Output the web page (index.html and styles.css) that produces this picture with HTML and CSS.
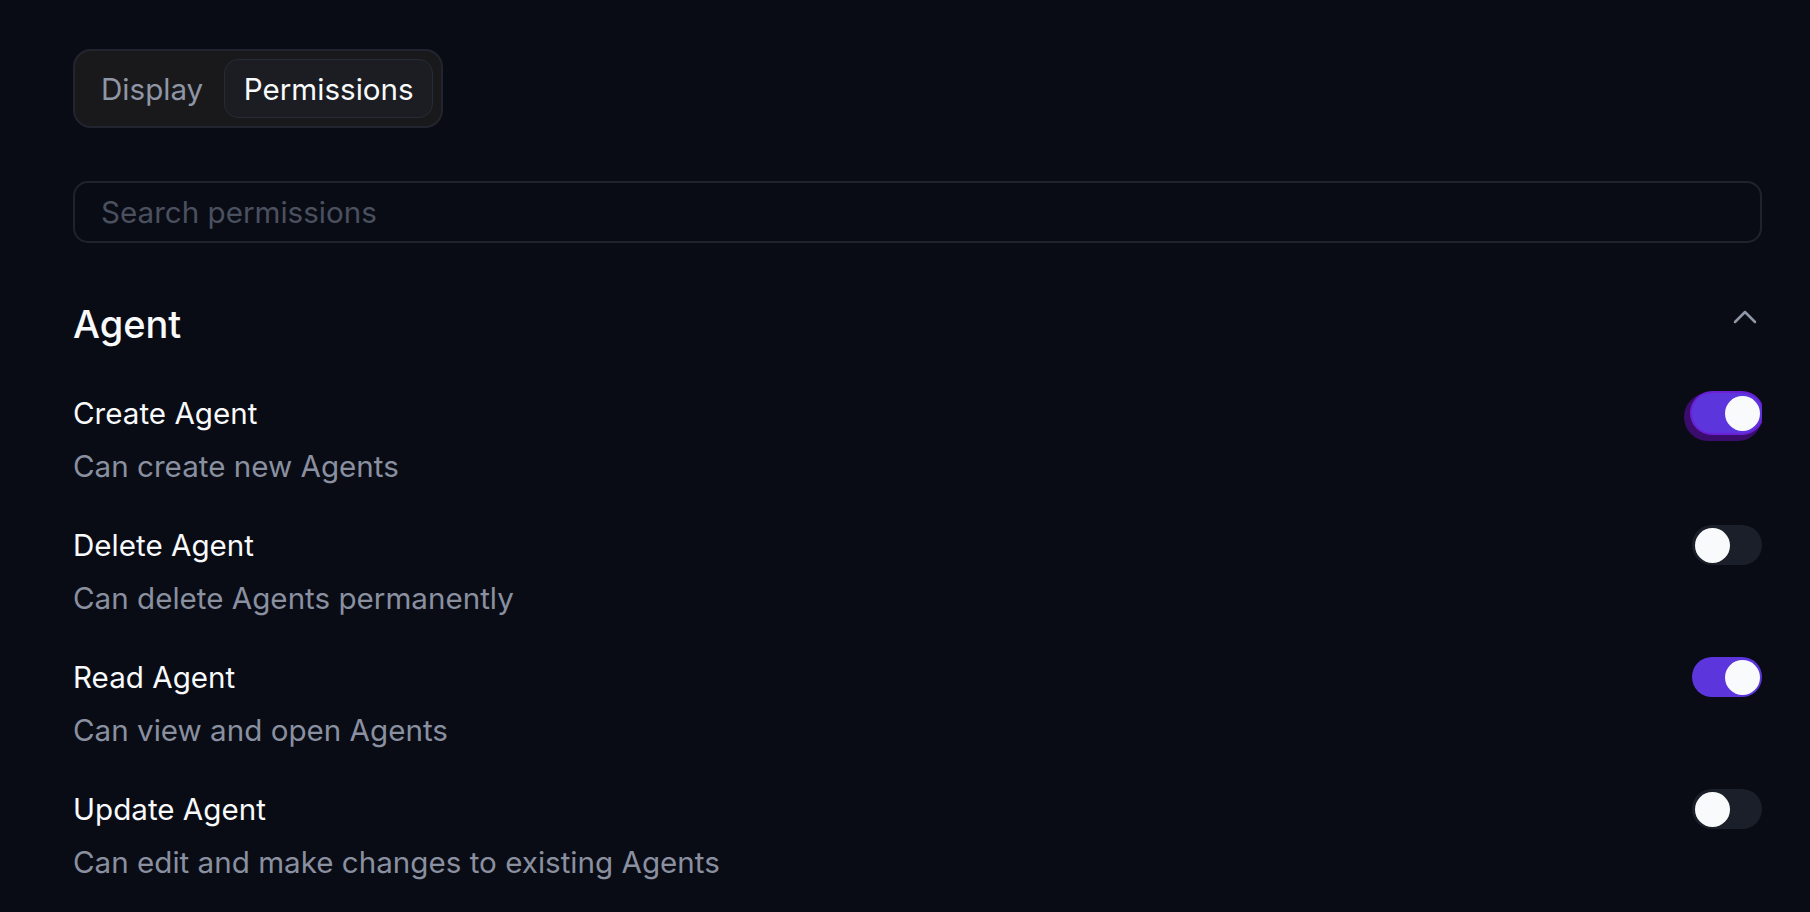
FILE: index.html
```html
<!DOCTYPE html>
<html lang="en">
<head>
<meta charset="utf-8">
<title>Permissions</title>
<link rel="stylesheet" href="styles.css">
</head>
<body>
<main class="page">
  <div class="tabs">
    <button class="tab">Display</button>
    <button class="tab tab-active">Permissions</button>
  </div>

  <input class="search" type="text" placeholder="Search permissions">

  <section class="group">
    <header class="group-head">
      <h2 class="group-title">Agent</h2>
      <svg class="chevron" viewBox="0 0 24 24" fill="none" stroke="currentColor" stroke-width="1.5" stroke-linecap="round" stroke-linejoin="round"><path d="m18 15-6-6-6 6"/></svg>
    </header>

    <div class="perm">
      <div class="perm-text">
        <div class="perm-title">Create Agent</div>
        <div class="perm-desc">Can create new Agents</div>
      </div>
      <span class="toggle toggle-on toggle-focus"><span class="knob"></span></span>
    </div>

    <div class="perm">
      <div class="perm-text">
        <div class="perm-title">Delete Agent</div>
        <div class="perm-desc">Can delete Agents permanently</div>
      </div>
      <span class="toggle"><span class="knob"></span></span>
    </div>

    <div class="perm">
      <div class="perm-text">
        <div class="perm-title">Read Agent</div>
        <div class="perm-desc">Can view and open Agents</div>
      </div>
      <span class="toggle toggle-on"><span class="knob"></span></span>
    </div>

    <div class="perm">
      <div class="perm-text">
        <div class="perm-title">Update Agent</div>
        <div class="perm-desc">Can edit and make changes to existing Agents</div>
      </div>
      <span class="toggle"><span class="knob"></span></span>
    </div>
  </section>
</main>
</body>
</html>
```

FILE: styles.css
```css
* { box-sizing: border-box; }

html, body {
  margin: 0;
  height: 100%;
  background: #090c15;
  overflow: hidden;
}

body {
  font-family: Inter, "Noto Sans", "Liberation Sans", sans-serif;
  color: #f8fafc;
}

.page {
  padding: 49px 48px 0 73px;
  display: flex;
  flex-direction: column;
}

.tabs {
  align-self: flex-start;
  display: flex;
  align-items: center;
  padding: 8px;
  border: 2px solid #22252f;
  border-radius: 18px;
  background: #19191c;
}

.tab {
  font-family: inherit;
  font-size: 29.6px;
  line-height: 36px;
  padding: 10.5px 18.5px;
  border: 1.5px solid transparent;
  border-radius: 14px;
  background: transparent;
  color: #8f96a5;
  cursor: pointer;
}

.tab:first-child { padding-left: 17px; padding-right: 20px; }

.tab-active {
  background: #1c1d22;
  border-color: #262b38;
  color: #f8fafc;
}

.search {
  margin-top: 53px;
  height: 62px;
  width: 100%;
  padding: 0 26px;
  border: 2px solid #1f232e;
  border-radius: 15px;
  background: transparent;
  font-family: inherit;
  font-size: 29.6px;
  color: #f8fafc;
  outline: none;
}

.search::placeholder { color: #4b505f; }

.group { margin-top: 56px; }

.group-head {
  display: flex;
  justify-content: space-between;
  align-items: flex-start;
  height: 50px;
}

.group-title {
  margin: 0;
  font-size: 38px;
  font-weight: 500;
  line-height: 50px;
  color: #f8fafc;
}

.chevron {
  width: 40px;
  height: 40px;
  margin-top: -2px;
  margin-right: -3px;
  color: #9097a6;
}

.perm {
  display: flex;
  justify-content: space-between;
  align-items: flex-start;
  margin-top: 44px;
}

.perm + .perm { margin-top: 39px; }

.perm-title {
  font-size: 29.6px;
  line-height: 40px;
  font-weight: 400;
  color: #f8fafc;
}

.perm-desc {
  margin-top: 13px;
  font-size: 29.6px;
  line-height: 40px;
  color: #8a90a0;
}

.toggle {
  position: relative;
  flex: none;
  width: 70px;
  height: 40px;
  border-radius: 20px;
  background: #1b1f29;
}

.knob {
  position: absolute;
  top: 2.5px;
  left: 2.5px;
  width: 35px;
  height: 35px;
  border-radius: 50%;
  background: #f8fafc;
}

.toggle-on { background: #5c36dc; }
.toggle-on .knob { left: auto; right: 2px; }

.toggle-focus {
  box-shadow: 0 0 0 2px #6a20d6, -4px 4px 0 4px #3a0d6c;
  clip-path: inset(-12px 0 -12px -12px);
}
```
